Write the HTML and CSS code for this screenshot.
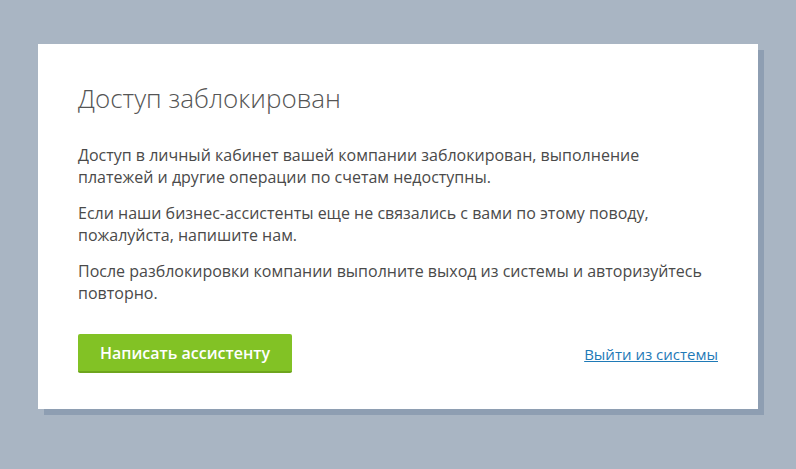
FILE: index.html
```html
<!DOCTYPE html>
<html lang="ru">
<head>
<meta charset="utf-8">
<link rel="stylesheet" href="styles.css">
</head>
<body>
<div class="page">
  <div class="card">
    <h1 class="title">Доступ заблокирован</h1>
    <p class="text">Доступ в личный кабинет вашей компании заблокирован, выполнение платежей и другие операции по счетам недоступны.</p>
    <p class="text">Если наши бизнес-ассистенты еще не связались с вами по этому поводу, пожалуйста, напишите нам.</p>
    <p class="text">После разблокировки компании выполните выход из системы и авторизуйтесь повторно.</p>
    <div class="actions">
      <button class="btn" type="button">Написать ассистенту</button>
      <a class="link" href="#">Выйти из системы</a>
    </div>
  </div>
</div>
</body>
</html>
```
FILE: styles.css
```css
html, body {
  margin: 0;
  padding: 0;
  background: #a9b5c3;
  height: 100%;
}
body {
  font-family: "Open Sans", "Noto Sans", sans-serif;
  color: #4a4a4a;
}
.page {
  padding: 44px 0 0 38px;
}
.card {
  width: 720px;
  height: 365px;
  box-sizing: border-box;
  background: #fff;
  box-shadow: 6px 6px 0 #8e9eb2;
  padding: 36px 40px 0 40px;
}
.title {
  margin: 0 0 28px;
  font-size: 26px;
  font-weight: 300;
  line-height: 36px;
  color: #555;
}
.text {
  max-width: 630px;
  margin: 0 0 14px;
  font-size: 16px;
  line-height: 22px;
  color: #4a4a4a;
}
.actions {
  display: flex;
  align-items: center;
  justify-content: space-between;
  margin-top: 30px;
}
.btn {
  width: 214px;
  height: 39px;
  border: 0;
  border-bottom: 2px solid #6ea51d;
  border-radius: 2px;
  background: #82c225;
  color: #fff;
  font-family: inherit;
  font-size: 16px;
  font-weight: 600;
  padding: 0;
}
.link {
  color: #1f7ab7;
  font-size: 15px;
  text-decoration: underline;
}
```
